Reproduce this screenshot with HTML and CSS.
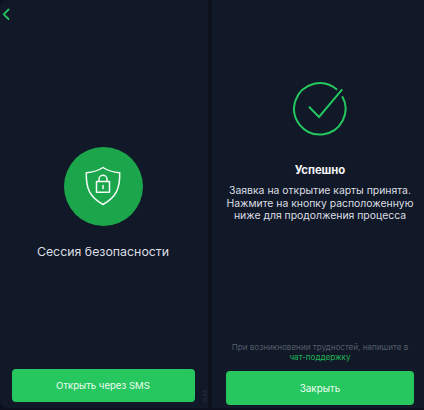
FILE: index.html
```html
<!DOCTYPE html>
<html lang="ru">
<head>
<meta charset="utf-8">
<title>Сессия безопасности</title>
<link rel="stylesheet" href="styles.css">
</head>
<body>
<main class="screens">
  <section class="screen screen-session">
    <svg class="back" viewBox="0 0 8 12"><path d="M6.500 1.500 1.700 6.300l4.800 4.700"/></svg>
    <div class="badge">
      <svg class="shield" viewBox="0 0 36 40">
        <path d="M18 1.500C13.500 4.500 7.500 6.200 1.300 6.700c-.4 16 3.700 24.600 16.700 31.800C31 31.300 35.100 22.700 34.700 6.700 28.500 6.200 22.500 4.500 18 1.500z"/>
        <path d="M11.500 15.500h13v10.700h-13zM14 15.500v-2.200a4 4 0 0 1 8 0v2.200M18 19.600v2.800"/>
      </svg>
    </div>
    <h1 class="session-title"><span>Сессия безопасности</span></h1>
    <button class="button button-sms"><span>Открыть через SMS</span></button>
    <span class="stamp">13:44</span>
  </section>
  <section class="screen screen-success">
    <svg class="check" viewBox="0 0 56 56">
      <path d="M45.100 8.800A25.700 25.700 0 1 0 50.200 15.200"/>
      <path d="m17 25.700 10 10.200L50.200 8.400"/>
    </svg>
    <h2 class="success-title"><span>Успешно</span></h2>
    <p class="message"><span>Заявка на открытие карты принята.</span><br><span>Нажмите на кнопку расположенную</span><br><span>ниже для продолжения процесса</span></p>
    <p class="help"><span>При возникновении трудностей, напишите в</span><br><a><span>чат-поддержку</span></a></p>
    <button class="button button-close"><span>Закрыть</span></button>
  </section>
</main>
</body>
</html>
```
FILE: styles.css
```css
* { box-sizing: border-box; margin: 0; }
body {
  background: #0c111d;
  font-family: Inter, "Liberation Sans", sans-serif;
  color: #dcdfe4;
}
.screens {
  display: grid;
  grid-template-columns: 208px 212px;
  column-gap: 4px;
  height: 410px;
  padding-bottom: 2px;
}
.screen {
  position: relative;
  display: flex;
  flex-direction: column;
  align-items: center;
  background: #111827;
}
.screen-session { border-radius: 8px 0 0 8px; }
svg { display: block; fill: none; stroke-linecap: round; stroke-linejoin: round; }
.back {
  width: 8px;
  height: 12px;
  margin: 8px 0 0 2px;
  align-self: flex-start;
  stroke: #22c55e;
  stroke-width: 1.8;
}
.badge {
  display: grid;
  place-items: center;
  width: 79px;
  height: 79px;
  margin: 126.500px 2px 0 0;
  border-radius: 50%;
  background: #1ca64c;
}
.shield { width: 36px; height: 40px; stroke: #f4fbf6; stroke-width: 1.5; }
.session-title {
  margin: 17px 2px 0 0;
  font-size: 12.350px;
  font-weight: 400;
  line-height: 18px;
  white-space: nowrap;
}
.button {
  border: 0;
  border-radius: 4px;
  background: #26c75f;
  color: #f0fdf4;
  font-family: inherit;
  font-size: 9.900px;
  padding: 0;
}
.button-sms {
  width: 183px;
  height: 33px;
  margin: auto 2px 6px 0;
  font-size: 9.600px;
}
.stamp {
  position: absolute;
  right: 0;
  bottom: 5px;
  font-size: 5px;
  line-height: 6px;
  color: #2b3344;
  writing-mode: vertical-rl;
  transform: rotate(180deg);
}
.check {
  width: 56px;
  height: 56px;
  margin: 80.500px 0 0 4px;
  stroke: #25c75f;
  stroke-width: 2;
  stroke-linecap: butt;
  stroke-linejoin: miter;
}
.success-title {
  margin: 25px 0 0 4px;
  font-size: 11.300px;
  font-weight: 700;
  line-height: 17px;
  color: #f3f4f6;
}
.message {
  margin: 6.800px 0 0 4px;
  font-size: 10.400px;
  line-height: 12.600px;
  text-align: center;
  white-space: nowrap;
}
.help {
  margin: auto 0 9px 4px;
  font-size: 8.100px;
  line-height: 10px;
  text-align: center;
  white-space: nowrap;
  color: #555c69;
}
.help a { color: #20b457; }
.button-close {
  width: 188px;
  height: 34px;
  margin: 0 0 3px 4px;
}
```
